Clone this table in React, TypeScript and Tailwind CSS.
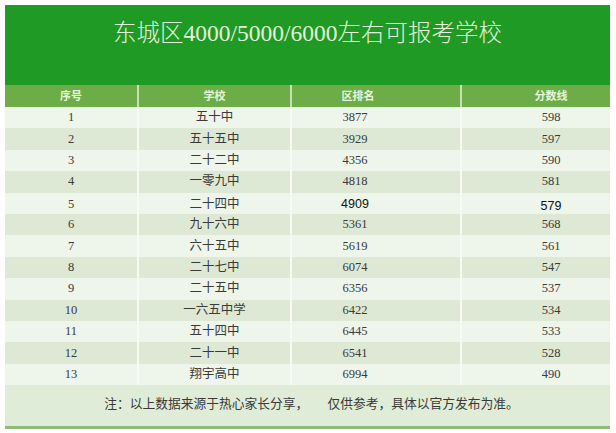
import React from 'react';

interface SchoolRow {
    no: number;
    name: string;
    rank: string;
    score: string;
    bold?: boolean;
}

const rows: SchoolRow[] = [
    { no: 1, name: '五十中', rank: '3877', score: '598' },
    { no: 2, name: '五十五中', rank: '3929', score: '597' },
    { no: 3, name: '二十二中', rank: '4356', score: '590' },
    { no: 4, name: '一零九中', rank: '4818', score: '581' },
    { no: 5, name: '二十四中', rank: '4909', score: '579', bold: true },
    { no: 6, name: '九十六中', rank: '5361', score: '568' },
    { no: 7, name: '六十五中', rank: '5619', score: '561' },
    { no: 8, name: '二十七中', rank: '6074', score: '547' },
    { no: 9, name: '二十五中', rank: '6356', score: '537' },
    { no: 10, name: '一六五中学', rank: '6422', score: '534' },
    { no: 11, name: '五十四中', rank: '6445', score: '533' },
    { no: 12, name: '二十一中', rank: '6541', score: '528' },
    { no: 13, name: '翔宇高中', rank: '6994', score: '490' },
];

const serif = { fontFamily: '"Liberation Serif", "Noto Sans CJK SC", serif' };
const sans = { fontFamily: '"Liberation Sans", "Noto Sans CJK SC", sans-serif' };

const App: React.FC = () => {
    return (
        <div className="w-[616px] h-[433px] bg-white p-[5px] pr-[6px] pb-[4px] overflow-hidden" style={serif}>
            <div className="flex flex-col w-[605px] h-[424px]">
                {/* title block */}
                <div className="h-[80px] bg-[#1f9a24] flex justify-center pt-[13px]">
                    <div className="text-[23.5px] leading-[30px] text-[#e4f3dc] font-light">
                        东城区4000/5000/6000左右可报考学校
                    </div>
                </div>

                {/* header row */}
                <div className="h-[22px] bg-[#6cad47] grid grid-cols-[134px_153px_170px_148px] text-[11px] text-[#e6f4dc] font-bold">
                    <div className="flex items-center justify-center border-r-2 border-[#c4e3b2]">序号</div>
                    <div className="flex items-center justify-center border-r-2 border-[#c4e3b2]">学校</div>
                    <div className="flex items-center justify-center border-r-2 border-[#c4e3b2] pr-[36px]">区排名</div>
                    <div className="flex items-center justify-center pl-[30px]">分数线</div>
                </div>

                {/* body rows */}
                <div className="flex flex-col">
                    {rows.map((r, i) => (
                        <div
                            key={r.no}
                            className={
                                'h-[21.4px] grid grid-cols-[134px_153px_170px_148px] text-[12.5px] text-[#3a3a3a] ' +
                                (i % 2 === 0 ? 'bg-[#eef5ea]' : 'bg-[#dde9d5]')
                            }
                        >
                            <div className="flex items-center justify-center border-r-2 border-[#f6faf3]">{r.no}</div>
                            <div className="flex items-center justify-center border-r-2 border-[#f6faf3]">{r.name}</div>
                            <div
                                className={
                                    'flex items-center justify-center border-r-2 border-[#f6faf3] pr-[42px] ' +
                                    (r.bold ? 'text-[#111] font-medium' : '')
                                }
                                style={r.bold ? sans : undefined}
                            >
                                {r.rank}
                            </div>
                            <div
                                className={
                                    'flex items-center justify-center pl-[30px] ' +
                                    (r.bold ? 'text-[#111] font-medium pt-[4px]' : '')
                                }
                                style={r.bold ? sans : undefined}
                            >
                                {r.score}
                            </div>
                        </div>
                    ))}
                </div>

                {/* footer note */}
                <div className="flex-1 bg-[#dfecd7] border-b-[3px] border-[#8fbb78] flex items-center justify-center pb-[2px]">
                    <div className="text-[12.75px] text-[#3a3a3a] pl-[8px]">
                        注：以上数据来源于热心家长分享，　　仅供参考，具体以官方发布为准。
                    </div>
                </div>
            </div>
        </div>
    );
};

export default App;
